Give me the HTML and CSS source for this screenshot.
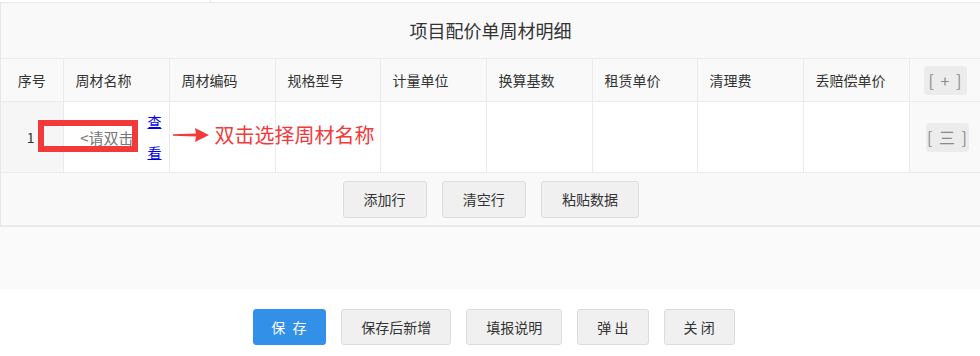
FILE: index.html
```html
<!DOCTYPE html>
<html>
<head>
    <title>项目配价单周材明细</title>
<link rel="stylesheet" href="styles.css">
</head>
<body>
    <div class="prev-row">
        <div class="prev-cell"></div>
    </div>
    <div class="panel">
        <div class="panel-title">项目配价单周材明细</div>
        <table class="detail-table">
            <colgroup>
                <col style="width:62px">
                <col style="width:106px">
                <col style="width:106px">
                <col style="width:105px">
                <col style="width:106px">
                <col style="width:106px">
                <col style="width:105px">
                <col style="width:106px">
                <col style="width:106px">
                <col style="width:72px">
            </colgroup>
            <thead>
                <tr>
                    <th class="col-no">序号</th>
                    <th>周材名称</th>
                    <th>周材编码</th>
                    <th>规格型号</th>
                    <th>计量单位</th>
                    <th>换算基数</th>
                    <th>租赁单价</th>
                    <th>清理费</th>
                    <th>丢赔偿单价</th>
                    <th class="col-op"><span class="mini-btn">[ + ]</span></th>
                </tr>
            </thead>
            <tbody>
                <tr class="data-row">
                    <td class="col-no">1</td>
                    <td class="name-cell">
                        <div class="name-wrap">
                            <input class="name-input" type="text" value="&lt;请双击" readonly>
                            <a class="view-link" href="#">查看</a>
                            <div class="mark-box"></div>
                            <div class="mark-note">
                                <svg width="36" height="16" viewBox="0 0 36 16">
                                    <polygon points="0,7.3 23,6.5 22,1 36,8 22,15 23,9.5 0,8.7" fill="#f23a3a"/>
                                </svg>
                                <span>双击选择周材名称</span>
                            </div>
                        </div>
                    </td>
                    <td></td>
                    <td></td>
                    <td></td>
                    <td></td>
                    <td></td>
                    <td></td>
                    <td></td>
                    <td class="col-op"><span class="mini-btn menu">[ 三 ]</span></td>
                </tr>
                <tr>
                    <td class="toolbar" colspan="10">
                        <button class="btn">添加行</button>
                        <button class="btn">清空行</button>
                        <button class="btn">粘贴数据</button>
                    </td>
                </tr>
            </tbody>
        </table>
    </div>
    <div class="blank-band"></div>
    <div class="actions">
        <button class="btn primary">保 存</button>
        <button class="btn">保存后新增</button>
        <button class="btn">填报说明</button>
        <button class="btn">弹 出</button>
        <button class="btn">关 闭</button>
    </div>
</body>
</html>
```

FILE: styles.css
```css
html, body {
  margin: 0;
  overflow: hidden;
}

body {
  font-family: "Microsoft YaHei", "Noto Sans CJK SC", sans-serif;
  font-size: 14px;
  color: #333;
  background: #fff;
}

.prev-row {
  height: 2px;
}

.prev-cell {
  width: 210px;
  height: 2px;
  border-right: 1px solid #e8e8e8;
}

.panel {
  border: 1px solid #e8e8e8;
  border-right: none;
  background: #f9f9f9;
}

.panel-title {
  height: 55px;
  line-height: 55px;
  text-align: center;
  font-size: 18px;
  color: #333;
}

.detail-table {
  border-collapse: collapse;
  table-layout: fixed;
  width: 980px;
}

.detail-table th,
.detail-table td {
  border: 1px solid #ebebeb;
  padding: 0 12px;
  text-align: left;
  font-weight: normal;
}

.detail-table th:first-child,
.detail-table td:first-child {
  border-left: none;
}

.detail-table th {
  height: 42px;
  background: #f9f9f9;
}

.detail-table th.col-no {
  text-align: center;
  padding: 0;
}

.detail-table .col-op {
  text-align: center;
  padding: 0;
  background: #f9f9f9;
}

.data-row td {
  height: 70px;
  background: #fff;
}

.data-row td.col-no {
  background: #f7f6f6;
  text-align: right;
  padding: 0 28px 0 0;
}

.data-row td.col-op {
  background: #f9f9f9;
}

.mini-btn {
  display: inline-block;
  width: 43px;
  height: 29px;
  line-height: 29px;
  border-radius: 4px;
  background: #ececec;
  color: #8a8a8a;
  font-size: 16px;
  word-spacing: 3px;
  text-align: center;
}

.mini-btn.menu {
  position: relative;
  left: 2px;
}

.detail-table td.name-cell {
  padding: 0 0 0 6px;
}

.name-wrap {
  position: relative;
  display: flex;
  align-items: center;
}

.name-input {
  width: 64px;
  height: 26px;
  border: none;
  outline: none;
  background: #fff;
  padding: 0 5px 0 0;
  margin: 0;
  text-align: right;
  font-family: inherit;
  font-size: 15px;
  color: #777;
}

.view-link {
  display: block;
  width: 14px;
  margin-left: 9px;
  line-height: 31px;
  font-size: 14px;
  color: #0000ee;
  text-decoration: underline;
  word-break: break-all;
}

.mark-box {
  position: absolute;
  left: -32px;
  top: 14px;
  width: 88px;
  height: 20px;
  border: 6px solid #f23a3a;
}

.mark-note {
  position: absolute;
  left: 103px;
  top: 14px;
  display: flex;
  align-items: center;
  gap: 6px;
  white-space: nowrap;
  color: #f23a3a;
  font-size: 20px;
}

.toolbar {
  height: 52px;
  text-align: center !important;
  background: #f9f9f9;
}

.btn {
  height: 37px;
  padding: 0 19px;
  margin: 0 6px;
  border: 1px solid #dcdcdc;
  border-radius: 3px;
  background: #f0f0f0;
  color: #333;
  font-family: inherit;
  font-size: 14px;
  white-space: nowrap;
  cursor: pointer;
}

.toolbar .btn {
  padding: 0 20px;
}

.blank-band {
  height: 62px;
  background: #fafafa;
}

.actions {
  display: flex;
  justify-content: center;
  gap: 15px;
  padding: 20px 0 0 8px;
}

.actions .btn {
  height: 36px;
  margin: 0;
}

.btn.primary {
  width: 73px;
  padding: 0;
  background: #3390e8;
  border-color: #3390e8;
  color: #fff;
  letter-spacing: 2px;
}
```
